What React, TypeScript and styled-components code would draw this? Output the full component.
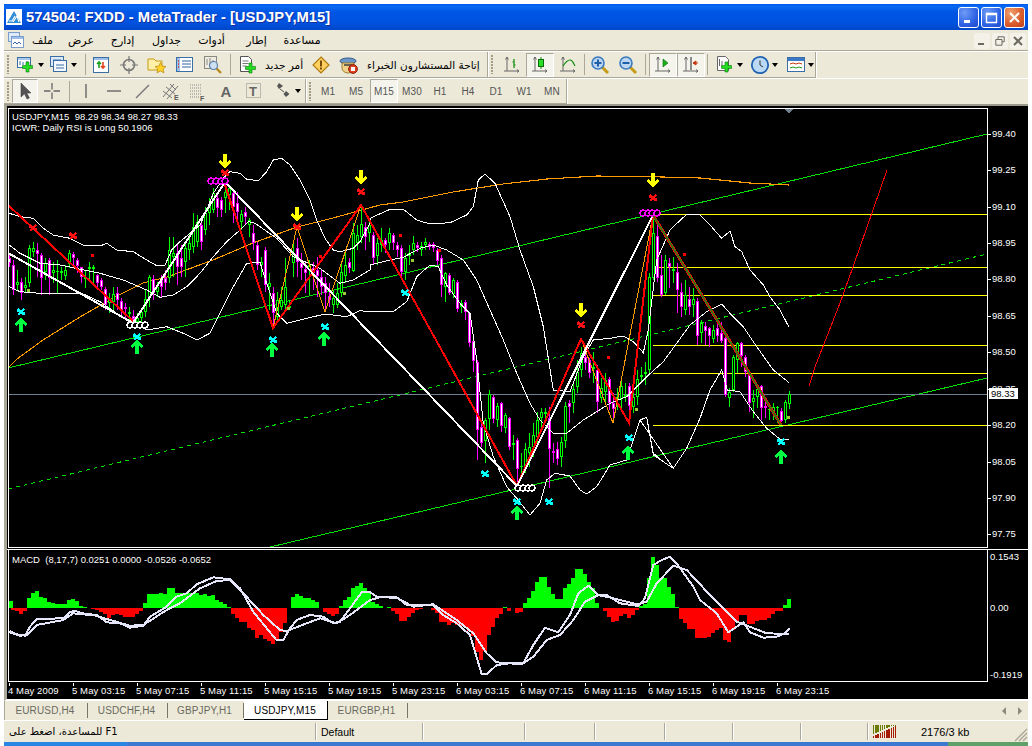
import React from "react";
import styled, { createGlobalStyle } from "styled-components";

const GlobalStyle = createGlobalStyle`
  html, body { margin: 0; padding: 0; background: #fff; }
  #root { width: 1032px; height: 746px; overflow: hidden; }
`;
const UI = `"Liberation Sans", "DejaVu Sans", sans-serif`;
const AR = `"DejaVu Sans", "Noto Sans", sans-serif`;
const BEIGE = "#ECE9D8";
const LINE = "#ACA899";

const Window = styled.div`
  margin: 4px 0 0 4px; width: 1024px; height: 742px;
  display: flex; flex-direction: column; background: ${BEIGE}; overflow: hidden;
`;
const TitleBar = styled.div`
  height: 26px; flex: none; display: flex; align-items: center; padding: 0 3px 0 2px;
  background: linear-gradient(180deg, #0058EE 0%, #0A6AF0 10%, #0055E5 30%, #0053E0 70%, #0247C8 100%);
`;
const TitleIcon = styled.svg`width: 16px; height: 16px; flex: none;`;
const TitleText = styled.span`
  margin-left: 4px; color: #fff; font: bold 14.8px ${UI}; white-space: nowrap;
  text-shadow: 1px 1px 0 #0F2F9C;
`;
const CaptionButtons = styled.div`margin-left: auto; display: flex; gap: 2px;`;
const CaptionButton = styled.div<{ $close?: boolean }>`
  width: 21px; height: 21px; box-sizing: border-box; border: 1px solid #fff; border-radius: 3px;
  display: flex; align-items: center; justify-content: center;
  background: ${(p) => (p.$close ? "radial-gradient(circle at 30% 25%, #F0A070, #DA5A2A 60%, #C0401A)" : "radial-gradient(circle at 30% 25%, #6E9CF6, #2E62E4 60%, #1F48C8)")};
`;
const MenuBar = styled.div`height: 20px; flex: none; display: flex; align-items: center; padding-left: 4px;`;
const MdiIcon = styled.svg`width: 16px; height: 16px; flex: none; margin-right: 0;`;
const MenuItem = styled.span<{ $w: number }>`
  width: ${(p) => p.$w}px; text-align: center; font: 11px ${AR}; color: #000; white-space: nowrap;
`;
const MdiButtons = styled.div`margin-left: auto; margin-right: 2px; display: flex; gap: 2px;`;
const MdiButton = styled.div`
  width: 16px; height: 16px; display: flex; align-items: center; justify-content: center;
  background: #F4F2E8; border-radius: 2px; margin-top: 2px;
`;
const Rebar = styled.div`flex: none; display: flex; flex-direction: column; border-top: 1px solid ${LINE};`;
const RebarRow = styled.div<{ $h: number }>`
  height: ${(p) => p.$h}px; display: flex; box-sizing: border-box; border-top: 1px solid #fff;
`;
const Segment = styled.div<{ $w: number }>`
  width: ${(p) => p.$w}px; flex: none; box-sizing: border-box; display: flex; align-items: center;
  padding-left: 3px; border-right: 1px solid ${LINE}; border-bottom: 1px solid ${LINE};
  box-shadow: 1px 0 0 #fff;
`;
const Grip = styled.div`
  width: 3px; height: 19px; flex: none; margin-right: 2px;
  background-image: radial-gradient(circle at 1px 1px, #A09C88 1px, transparent 1.1px);
  background-size: 3px 3px;
`;
const ToolButton = styled.div<{ $w?: number; $pressed?: boolean; $pad?: number }>`
  width: ${(p) => p.$w ?? 28}px; height: 24px; flex: none; box-sizing: border-box;
  display: flex; align-items: center; justify-content: ${(p) => (p.$pad !== undefined ? "flex-start" : "center")};
  padding-left: ${(p) => p.$pad ?? 0}px; gap: 3px;
  border: 1px solid ${(p) => (p.$pressed ? LINE : "transparent")};
  border-right-color: ${(p) => (p.$pressed ? "#fff" : "transparent")};
  border-bottom-color: ${(p) => (p.$pressed ? "#fff" : "transparent")};
  background: ${(p) => (p.$pressed ? "#F5F4EC" : "transparent")};
`;
const ToolSep = styled.div<{ $w?: number }>`
  width: ${(p) => p.$w ?? 5}px; height: 21px; flex: none; display: flex; justify-content: center;
  &::before { content: ""; width: 1px; background: ${LINE}; }
`;
const ToolIcon = styled.svg`width: 18px; height: 18px; flex: none; overflow: visible;`;
const Caret = styled.span`
  width: 0; height: 0; flex: none; border: 3px solid transparent; border-top: 4px solid #000; border-bottom: 0;
`;
const ToolLabel = styled.span<{ $gap?: number }>`
  font: 10.5px ${AR}; color: #000; white-space: nowrap; margin-left: ${(p) => p.$gap ?? 6}px;
`;
const PeriodButton = styled(ToolButton)`font: 10px ${UI}; color: #555; letter-spacing: .1px;`;

const ChartFrame = styled.div`
  height: 597px; flex: none; box-sizing: border-box; background: #000;
  border-top: 2px solid #9C9A8C; border-left: 3px solid ${LINE}; display: flex; flex-direction: column;
  border-bottom: 2px solid #fff;
`;
const Pane = styled.svg`display: block; flex: none; font-family: ${UI};`;
const ChartText = styled.text<{ $ls?: number; $dark?: boolean }>`
  fill: ${(p) => (p.$dark ? "#000" : "#fff")}; font-size: 9.5px; letter-spacing: ${(p) => p.$ls ?? 0}px; white-space: pre;
`;
const TabBar = styled.div`height: 20px; flex: none; display: flex; border-bottom: 1px solid #fff; box-sizing: border-box;`;
const Tab = styled.div<{ $w: number; $active?: boolean; $first?: boolean }>`
  width: ${(p) => p.$w}px; flex: none; box-sizing: border-box; font: 10px ${UI};
  display: flex; align-items: center; justify-content: center; letter-spacing: .15px;
  padding-right: ${(p) => (p.$active ? 1 : 3)}px;
  color: ${(p) => (p.$active ? "#000" : "#6A6A60")};
  background: ${(p) => (p.$active ? "#fff" : "linear-gradient(#77756A,#77756A) right center / 1px 15px no-repeat")};
  border-left: ${(p) => (p.$first ? `1px solid ${LINE}` : "0")};
  border-right: ${(p) => (p.$active ? "1px solid #000" : "0")};
  border-bottom: ${(p) => (p.$active ? "1px solid #000" : "0")};
`;
const TabArrows = styled.div`margin-left: auto; margin-right: 6px; display: flex; align-items: center; gap: 12px;`;
const TabArrow = styled.span<{ $right?: boolean }>`
  width: 0; height: 0; border: 4px solid transparent;
  ${(p) => (p.$right ? "border-left: 4px solid #8C8A7E; border-right: 0;" : "border-right: 4px solid #8C8A7E; border-left: 0;")}
`;
const StatusBar = styled.div`height: 21px; flex: none; display: flex; align-items: center; position: relative;`;
const StatusCell = styled.div<{ $w: number; $first?: boolean }>`
  width: ${(p) => p.$w}px; height: 17px; flex: none; box-sizing: border-box; display: flex; align-items: center;
  padding-left: 5px; font: 10.5px ${UI}; color: #000; white-space: nowrap;
  border-left: ${(p) => (p.$first ? "0" : `1px solid ${LINE}`)}; box-shadow: ${(p) => (p.$first ? "none" : "inset 1px 0 0 #fff")};
`;
const HelpText = styled.span`direction: rtl; font: 10px ${AR}; unicode-bidi: isolate;`;
const Traffic = styled.svg`width: 24px; height: 13px; flex: none;`;
const Traffic2 = styled.span`margin-left: 24px; font: 11px ${UI};`;
const ResizeGrip = styled.svg`position: absolute; right: 0; bottom: 0; width: 14px; height: 14px;`;
const BottomStrip = styled.div`flex: 1; display: flex;`;
const StripPart = styled.div<{ $c: string; $w?: number }>`
  background: ${(p) => p.$c}; ${(p) => (p.$w ? `width:${p.$w}px;` : "flex:1;")}
`;

/* ---------- chart data, traced bar by bar ---------- */
const z5 = "m445,460,430,470;m465,540,450,555;g515,525,480,540;m515,548,505,570;g525,535,500,545;g415,520,405,530;g415,425,395,440;m420,432,400,500;m435,505,430,555;g458,485,445,510;m450,505,445,555;g480,490,455,520;g484,487,450,550;g484,488,470,510;g480,498,465,510;g430,462,420,475;m433,445,425,470;m450,468,445,490;m472,502,470,520;g500,508,480,535;g472,478,455,510;g472,478,465,520;m495,520,492,530;m510,532,505,540;m537,585,530,600;g570,578,550,610;g552,575,530,610;m548,570,530,600;m572,602,565,620;m590,598,580,625;g605,612,590,640;m617,628,600,640;g625,635,610,640;g605,625,595,650;g568,605,540,620;g502,565,495,590;m508,548,495,570;g530,545,515,560;m510,530,495,560;m505,520,480,540;g420,505,380,520;g430,440,380,500;m430,470,400,525;m445,470,405,500;g415,455,400,500;g400,420,370,450;g350,410,310,430;g335,395,315,410;m345,395,320,420;g310,360,290,375;g285,310,265,345;g250,300,235,310;m265,295,250,320;m270,300,260,320;g245,265,225,310;g235,255,225,300;m250,290,245,340;m280,305,245,345;g312,335,300,360;m305,320,290,345;g330,345,325,380;m370,400,345,420;m405,465,395,480;g455,465,440,500;m420,525,410,545;g518,530,490,600;m550,610,530,650;g570,620,545,640;g570,590,530,600;g530,585,445,600;g588,595,570,600;g430,460,390,500;m415,455,385,500;m460,475,430,510;m478,490,455,550;g465,480,450,555;m475,490,455,540;m480,498,440,560;m500,530,480,555;m520,550,500,600;m558,570,520,590;g565,585,540,610;g550,585,520,595;g487,550,460,560;g465,498,430,520;m457,473,445,490;g370,482,340,485;g375,400,345,420;g342,380,290,400;m350,380,335,420;g345,370,335,395;m375,445,365,465";
const z6 = "g220,258,205,285;g210,225,175,245;m210,225,205,250;g190,220,175,240;m195,220,190,240;m225,240,215,262;m235,305,225,318;g265,305,250,330;g250,258,225,285;g220,240,198,255;m225,235,215,245;g228,240,215,258;g215,225,205,240;m222,230,215,240;m222,235,215,245;m240,272,235,285;m265,345,255,380;g308,350,305,395;m315,368,310,375;g330,372,325,385;m335,418,330,425;g400,412,390,430;m395,425,390,450;m430,520,425,530;m512,572,500,605;m575,780,570,870;m770,818,755,830;g750,812,745,880;g672,748,660,780;m680,748,675,760;g708,750,700,770;m700,768,695,785;g735,775,730,790;m745,832,740,840;g818,826,795,870;m810,898,805,945;g888,892,850,925;g838,895,820,910;g832,850,790,890;g795,830,760,860;g750,800,725,830;g725,745,715,785;g725,732,715,745;m745,838,710,955;m843,848,820,880;m838,868,815,885;g815,862,800,890;g708,812,695,835;m700,710,690,760;g658,700,640,730;g605,650,570,670;g550,600,530,620;m560,578,540,600;m570,610,565,625;g592,598,545,640;m600,695,585,730;g655,685,625,700;g630,665,610,700;m628,698,620,720;m698,718,670,760;g680,690,655,720;g648,688,630,720;g675,682,640,695;m648,708,640,765;g680,712,650,730;g628,680,600,705;g616,620,590,640;g606,612,575,645;g320,600,310,610;g190,325,135,330";
const z7 = "m198,325,165,335;m315,375,255,380;g270,370,255,375;m278,290,265,355;g298,302,260,340;m305,360,280,430;m365,410,340,440;g375,420,330,435;m388,410,350,435;g388,405,355,440;m393,497,385,525;g460,490,450,520;m468,482,455,525;m475,498,470,530;g480,508,465,520;m475,498,445,515;m490,512,455,520;m505,675,500,680;g665,685,655,710;g560,660,555,665;g520,570,515,610;m520,558,515,590;m560,605,555,620;m615,700,610,725;g683,695,660,745;g658,680,650,715;m648,715,645,750;m708,715,690,745;g716,720,700,750;g710,725,700,750;g712,714,708,760;m724,752,715,755;g695,750,690,760;g672,702,663,717";
const parse = (s: string, y0: number) =>
  s.split(";").map((e) => {
    const [t, b, h, l] = e.slice(1).split(",").map((n) => Math.round(y0 + Number(n) / 3));
    return { up: e[0] === "g", t, b, h, l };
  });
const candles = [...parse(z5, 110), ...parse(z6, 170), ...parse(z7, 170)];

const macdTops = [168,195,198,206,198,160,143,138,155,158,170,175,177,177,177,165,162,168,182,187,190,193,195,200,208,218,210,208,210,215,215,215,208,198,175,148,148,147,145,148,130,130,143,145,148,143,143,143,150,148,152,150,165,172,178,185,208,220,230,232,250,255,278,270,282,288,296,285,262,235,188,155,148,152,158,158,165,172,188,200,208,213,206,182,165,157,130,122,113,128,140,172,178,182,190,186,198,208,228,228,215,205,195,192,190,188,195,205,232,232,240,235,240,244,245,258,272,322,345,318,270,245,218,208,186,198,188,203,
  202,175,158,138,112,95,95,125,148,162,162,128,117,100,72,72,88,110,130,175,190,198,215,230,227,212,207,218,210,196,182,178,100,35,60,100,100,125,148,185,222,235,252,252,278,278,278,275,265,255,250,285,290,255,228,210,210,238,238,228,225,225,218,207,198,198,180,162];

type P = [number, number];
const toPts = (pts: P[], ox: number, oy: number) =>
  pts.map(([x, y]) => `${(ox + x / 3).toFixed(1)},${(oy + y / 3).toFixed(1)}`).join(" ");
const join = (...a: string[]) => a.join(" ");

const bandA = join(
  toPts([[28,310],[60,320],[100,325],[130,355],[160,375],[210,385],[250,405],[300,408],[320,400],[350,420],[400,425],[440,450],[470,467],[495,465],[515,420],[540,395],[570,370],[600,345],[620,300],[640,250],[670,205],[690,185],[720,190],[740,208],[775,212],[800,185],[820,150],[845,145],[870,165],[900,210],[930,270],[950,330],[975,385],[1000,420],[1020,425],[1060,415],[1080,395],[1110,340]], 0, 110),
  toPts([[0,145],[60,118],[100,118],[140,150],[180,162],[240,158],[290,135],[310,110],[325,30],[345,12],[375,40],[420,140],[450,240],[490,350],[520,470],[550,660],[600,665],[640,560],[670,510],[720,505],[760,498],[790,515],[820,548],[835,480],[860,270],[900,180]], 370, 170),
  toPts([[100,170],[140,133],[180,135],[210,165],[245,205],[270,183],[285,230],[305,245],[330,300],[370,345],[390,380],[420,420],[446,470]], 640, 170));
const bandB = join(
  toPts([[28,405],[60,430],[120,460],[180,465],[300,490],[370,510],[440,540],[480,562],[520,555],[560,530],[600,490],[640,440],[680,395],[720,360],[745,335],[765,340],[830,385],[880,440],[960,475],[1020,520],[1060,510],[1110,480]], 0, 110),
  toPts([[0,285],[60,270],[100,262],[150,235],[190,225],[230,240],[280,270],[320,330],[360,420],[400,510],[440,610],[480,700],[510,750],[550,790],[590,790],[640,750],[680,725],[720,700],[770,680],[830,620],[880,575]], 370, 170),
  toPts([[150,465],[200,425],[245,402],[270,430],[310,470],[350,530],[400,600],[446,637]], 640, 170));
const bandC = join(
  toPts([[28,530],[60,545],[120,550],[250,552],[300,575],[350,610],[400,640],[440,660],[500,650],[550,670],[590,690],[630,670],[660,610],[700,530],[740,460],[780,457],[800,520],[830,610],[860,640],[920,625],[975,612],[1040,620],[1080,602]], 0, 110),
  toPts([[0,425],[70,425],[110,395],[140,320],[180,285],[205,290],[230,345],[270,400],[300,430],[320,570],[340,760],[370,860],[410,950],[440,985],[480,1035],[510,1000],[530,930],[555,910],[600,918],[630,960],[650,972],[680,950],[720,885],[770,870],[810,750],[830,742],[850,850],[880,875],[910,895]], 370, 170),
  toPts([[0,750],[20,742],[40,855],[100,895],[140,835],[180,745],[210,660],[245,600],[262,660],[300,665],[340,725],[380,775],[420,808],[446,808]], 640, 170));
const orange = "9,367 17,359 43,340 80,317 113,298 143,283 167,277 213,260 253,243 297,227 333,218 380,205 403,202 453,192 503,184 547,179 597,176 663,177 700,178 750,183 789,185";
const macd1 = join(
  toPts([[28,258],[50,268],[75,272],[90,245],[110,222],[190,220],[210,202],[225,197],[245,205],[290,210],[320,232],[360,235],[390,248],[430,242],[450,215],[500,185],[530,155],[560,145],[590,118],[640,97],[690,103],[720,130],[760,200],[800,250],[830,286],[850,285],[870,250],[890,225],[930,210],[970,215],[1000,235],[1020,230],[1050,190],[1085,142],[1110,142],[1130,155],[1190,157],[1220,180],[1300,180],[1330,210],[1370,235],[1410,270],[1425,320],[1445,388],[1460,388],[1490,360],[1530,355]], 0, 545),
  toPts([[0,355],[40,355],[70,300],[105,248],[145,262],[180,210],[205,145],[235,122],[265,150],[290,150],[330,175],[385,183],[405,160],[430,60],[455,45],[480,35],[500,55],[550,125],[570,165],[620,205],[655,262],[700,232],[720,262],[760,278],[800,275],[825,265],[838,250]], 510, 545));
const macd2 = join(
  toPts([[28,262],[60,272],[80,270],[110,240],[190,225],[220,205],[290,212],[320,222],[390,242],[430,240],[500,195],[540,175],[600,130],[650,108],[690,105],[730,145],[790,210],[840,255],[860,258],[920,235],[960,220],[1010,235],[1050,210],[1110,165],[1140,157],[1190,158],[1240,185],[1300,178],[1370,225],[1420,265],[1460,325],[1490,352],[1530,355]], 0, 545),
  toPts([[0,355],[35,358],[70,335],[110,285],[150,270],[190,225],[225,170],[265,150],[310,160],[380,178],[410,170],[440,115],[490,62],[530,75],[600,150],[680,230],[770,265],[838,267]], 510, 545));

const priceLabels: [string, number][] = [["99.40",134],["99.25",170],["99.10",207],["98.95",243],["98.80",279],["98.65",316],["98.50",352],["98.35",389],["98.20",425],["98.05",462],["97.90",498],["97.75",534]];
const fibY = [214, 267, 295, 345, 373, 425];
const times = ["4 May 2009","5 May 03:15","5 May 07:15","5 May 11:15","5 May 15:15","5 May 19:15","5 May 23:15","6 May 03:15","6 May 07:15","6 May 11:15","6 May 15:15","6 May 19:15","6 May 23:15"];
const yellowArrows: P[] = [[225,161],[297,214],[361,177],[581,310],[653,180]];
const greenArrows: P[] = [[21,325],[137,347],[272,350],[324,339],[517,513],[628,453],[781,457]];
const redStars: P[] = [[33,228],[73,236],[225,173],[297,227],[361,192],[581,325],[653,198]];
const cyanStars: P[] = [[21,312],[137,337],[273,340],[325,327],[405,293],[485,474],[517,502],[549,502],[629,438],[781,442]];
const redDots: P[] = [[92,255],[320,256],[400,235],[439,250],[608,357],[684,254]];
const limeDots: P[] = [[28,290],[344,293],[288,308],[412,260],[636,409],[788,417]];
const rings = [{ xs: [130,135,140,145], y: 325, c: "#fff" }, { xs: [211,216,221,225], y: 181, c: "#FF00FF" }, { xs: [518,523,528,532], y: 488, c: "#fff" }, { xs: [643,648,652,657], y: 213, c: "#FF00FF" }];

const Star = ({ x, y, c }: { x: number; y: number; c: string }) => (
  <path d={`M${x - 3} ${y - 3}L${x + 3} ${y + 3}M${x - 3} ${y + 3}L${x + 3} ${y - 3}M${x - 3} ${y}L${x - 3} ${y - 3}M${x + 3} ${y}L${x + 3} ${y + 3}`} stroke={c} strokeWidth="1.6" fill="none" />
);

const MainPane = () => (
  <Pane width={1021} height={444} viewBox="7 106 1021 444" shapeRendering="crispEdges">
    <polyline points="8,368 987,134" stroke="#00E000" fill="none" />
    <polyline points="8,489 987,254" stroke="#00E000" strokeDasharray="4 4" fill="none" />
    <polyline points="270,547 987,378" stroke="#00E000" fill="none" />
    <polyline points={orange} stroke="#FF9A00" fill="none" strokeWidth="1.1" />
    <line x1="8" x2="987" y1="394.5" y2="394.5" stroke="#708090" />
    {fibY.map((y) => <line key={y} x1="653" x2="987" y1={y + 0.5} y2={y + 0.5} stroke="#FFFF00" />)}
    {candles.map((c, i) => {
      const x = 9 + 4 * i;
      const col = c.up ? "#00FF00" : "#FF00FF";
      return (
        <g key={i}>
          <rect x={x} y={c.h} width={1} height={Math.max(c.l - c.h, 1)} fill={col} />
          <rect x={x - 1} y={c.t} width={3} height={Math.max(c.b - c.t, 1)} fill={col} />
          {c.b - c.t > 2 && <rect x={x} y={c.t + 1} width={1} height={c.b - c.t - 2} fill={c.up ? "#000" : "#fff"} />}
        </g>
      );
    })}
    <polyline points={bandA} stroke="#fff" fill="none" />
    <polyline points={bandB} stroke="#fff" fill="none" />
    <polyline points={bandC} stroke="#fff" fill="none" />
    <polyline points="273,328 297,227 325,312 361,205" stroke="#FF9A00" fill="none" />
    <polyline points="581,339 613,423 653,215" stroke="#FF9A00" fill="none" />
    <polyline points="8,205 135,323" stroke="#FF0000" strokeWidth="2" fill="none" />
    <polyline points="225,185 273,328 361,205 517,486 581,339 629,423 653,215" stroke="#FF0000" strokeWidth="2" fill="none" />
    <polyline points="653,215 781,425" stroke="#FF0000" strokeWidth="3" fill="none" />
    <polyline points="653,215 781,425" stroke="#2E7D12" strokeWidth="1.6" fill="none" />
    <polyline points="8,253 133,323 225,182 517,486 653,215" stroke="#fff" strokeWidth="2" fill="none" />
    <polyline points="809,386 815,367 840,303 853,267 887,170" stroke="#FF0000" fill="none" />
    {rings.map((r) => r.xs.map((x) => <circle key={`${r.y}-${x}`} cx={x} cy={r.y} r={2.8} fill="#000" stroke={r.c} strokeWidth="1.6" />))}
    {redDots.map(([x, y]) => <rect key={x} x={x - 1} y={y - 1} width={3} height={3} fill="#FF0000" />)}
    {limeDots.map(([x, y]) => <rect key={x} x={x - 1} y={y - 1} width={3} height={3} fill="#9ACD32" />)}
    {yellowArrows.map(([x, y]) => <path key={x} d={`M${x} ${y - 7}V${y + 6}M${x - 5.5} ${y}L${x} ${y + 5.5}L${x + 5.5} ${y}`} stroke="#FFFF00" strokeWidth="3.4" fill="none" />)}
    {greenArrows.map(([x, y]) => <path key={x} d={`M${x} ${y + 7}V${y - 6}M${x - 5.5} ${y}L${x} ${y - 5.5}L${x + 5.5} ${y}`} stroke="#00FF40" strokeWidth="3.4" fill="none" />)}
    {redStars.map(([x, y]) => <Star key={x} x={x} y={y} c="#FF1010" />)}
    {cyanStars.map(([x, y]) => <Star key={x} x={x} y={y} c="#00FFFF" />)}
    <rect x="8.5" y="108.5" width="979" height="439" fill="none" stroke="#fff" />
    <line x1="7" x2="1028" y1="549.5" y2="549.5" stroke="#fff" />
    <path d="M785 109h8l-4 5z" fill="#708090" />
    {priceLabels.map(([t, y]) => (
      <g key={t}>
        <line x1="988" x2="991" y1={y} y2={y} stroke="#fff" />
        <ChartText x={992} y={y + 3}>{t}</ChartText>
      </g>
    ))}
    <rect x="989" y="388" width="29" height="11" fill="#fff" />
    <ChartText x={991} y={397} $dark>98.33</ChartText>
    <ChartText x={12} y={120}>USDJPY,M15  98.29 98.34 98.27 98.33</ChartText>
    <ChartText x={12} y={131}>ICWR: Daily RSI is Long 50.1906</ChartText>
  </Pane>
);

const MacdPane = () => (
  <Pane width={1021} height={133} viewBox="7 550 1021 133" shapeRendering="crispEdges">
    {macdTops.map((t, i) => {
      const x = 7.33 + 4 * i;
      const top = 545 + t / 3;
      const base = 607.5;
      const up = top < base;
      return (
        <rect key={i} x={Math.max(x, 9)} y={up ? top : base} width={4} height={Math.abs(top - base)} fill={up ? "#00FF00" : "#FF0000"} />
      );
    })}
    <polyline points={macd1} stroke="#E6E6FA" strokeWidth="2" fill="none" />
    <polyline points={macd2} stroke="#E6E6FA" strokeWidth="2" fill="none" />
    <line x1="8.5" x2="8.5" y1="550" y2="682" stroke="#fff" />
    <line x1="987.5" x2="987.5" y1="550" y2="682" stroke="#fff" />
    <line x1="8" x2="988" y1="681.5" y2="681.5" stroke="#fff" />
    <ChartText x={12} y={563}>MACD  (8,17,7) 0.0251 0.0000 -0.0526 -0.0652</ChartText>
    <ChartText x={990} y={560}>0.1543</ChartText>
    <ChartText x={990} y={611}>0.00</ChartText>
    <ChartText x={990} y={678}>-0.1919</ChartText>
  </Pane>
);

const TimeAxis = () => (
  <Pane width={1021} height={18} viewBox="7 682 1021 18" shapeRendering="crispEdges">
    {times.map((t, i) => (
      <g key={i}>
        <line x1={9.5 + 64 * i} x2={9.5 + 64 * i} y1="682" y2="685" stroke="#fff" />
        <ChartText x={8 + 64 * i} y={693} $ls={0.1}>{t}</ChartText>
      </g>
    ))}
  </Pane>
);

/* ---------- toolbar drawings ---------- */
const Plus = ({ x = 8, y = 9 }: { x?: number; y?: number }) => (
  <path d={`M${x + 3} ${y}h3v3.5h3.5v3H${x + 6}v3.5h-3v-3.5H${x - 0.5}v-3H${x + 3}z`} fill="#22DD22" stroke="#0B7B0B" strokeWidth=".6" />
);
const Axes = ({ c = "#666" }: { c?: string }) => (
  <path d="M4 1v14M1 15h15M2.5 3.5L4 1l1.5 2.5M14 13.5l2 1.5-2 1.5" stroke={c} fill="none" strokeWidth="1" />
);
const Mag = ({ sign }: { sign?: "+" | "-" }) => (
  <>
    <path d="M11 11l6 6" stroke="#C79A16" strokeWidth="3" />
    <circle cx="7" cy="7" r="6" fill="#BBD5F2" stroke="#3A7BBF" strokeWidth="1.6" />
    {sign && <path d={sign === "+" ? "M3.5 7h7M7 3.5v7" : "M3.5 7h7"} stroke="#1F5FA8" strokeWidth="2" />}
  </>
);
const Blue = "#3A6EA5";
const icons: Record<string, React.ReactNode> = {
  newChart: (<><rect x="0.5" y="1.5" width="13" height="10" fill="#fff" stroke={Blue} /><rect x="1" y="2" width="12" height="2" fill="#A8C8EE" /><path d="M3 9v-4M6 9V6M10 9V5" stroke={Blue} /><Plus x={6} y={6} /></>),
  profiles: (<><rect x="0.5" y="0.5" width="13" height="10" fill="#DCE9F8" stroke={Blue} /><rect x="3.5" y="4.5" width="13" height="11" fill="#F5F8FE" stroke={Blue} /><path d="M3 4h8M6 9h8M6 12h8" stroke={Blue} /></>),
  market: (<><rect x="1.5" y="1.5" width="15" height="15" fill="#fff" stroke={Blue} /><rect x="2" y="2" width="14" height="2" fill="#9CC0EA" /><path d="M7 12V6M5 8l2-2 2 2" stroke="#1CA01C" strokeWidth="1.6" fill="none" /><path d="M11 6v6M9 10l2 2 2-2" stroke="#E0441C" strokeWidth="1.6" fill="none" /></>),
  target: (<><circle cx="9" cy="9" r="5.5" fill="none" stroke="#777" strokeWidth="1.6" /><path d="M9 0v6M9 12v6M0 9h6M12 9h6" stroke="#777" strokeWidth="1.2" /></>),
  fav: (<><path d="M0 3h6l2 2h6v9H0z" fill="#FFF0A8" stroke="#C79A16" /><path d="M12.5 6.5l1.7 3.6 3.8.4-2.9 2.6.9 3.8-3.5-2-3.5 2 .9-3.8-2.9-2.6 3.8-.4z" fill="#FFD426" stroke="#B8820C" strokeWidth=".7" /></>),
  nav: (<><rect x="0.5" y="1.5" width="16" height="14" fill="#fff" stroke={Blue} /><rect x="1" y="2" width="3" height="13" fill="#9CC0EA" /><path d="M6 5h9M6 8h9M6 11h9" stroke="#2F62A8" /><path d="M2 5h1M2 8h1M2 11h1" stroke="#D03020" strokeWidth="1.4" /></>),
  tester: (<><rect x="0.5" y="0.5" width="12" height="12" fill="#EEECE0" stroke="#8A8A80" /><path d="M3 3v6M6 2v7M9 4v5" stroke="#8A8A80" /><path d="M12 12l5 5" stroke="#B88A20" strokeWidth="2.4" /><circle cx="9.5" cy="9.5" r="4" fill="#CFE0F2" stroke="#5A7FA8" strokeWidth="1.2" /></>),
  order: (<><path d="M1.5 .5h8l3 3v12h-11z" fill="#fff" stroke="#555" /><path d="M3.5 5h6M3.5 7.5h6M3.5 10h4" stroke="#777" /><Plus x={7} y={7} /></>),
  warn: (<><path d="M9 1l8 8-8 8-8-8z" fill="#FFD060" stroke="#B07A10" strokeWidth="1.2" /><path d="M9 4.5v6" stroke="#7A4A08" strokeWidth="2" /><rect x="8" y="11.5" width="2" height="2" fill="#7A4A08" /></>),
  expert: (<><ellipse cx="8" cy="5" rx="8" ry="3" fill="#6A96C8" stroke="#345A8C" /><path d="M2 7h12v5a6 5 0 0 1-12 0z" fill="#F1D28A" stroke="#9C7A30" /><path d="M4 9h8" stroke="#333" strokeWidth="1.4" /><circle cx="13" cy="13" r="4.4" fill="#E04020" stroke="#8C2008" /><rect x="11" y="11" width="4" height="4" fill="#fff" /></>),
  bars: (<><Axes /><path d="M11 3v9M9.5 6H11M11 9h1.5" stroke="#0A8A0A" strokeWidth="1.2" /></>),
  candle: (<><Axes /><path d="M10 1v12" stroke="#0A8A0A" /><rect x="7.5" y="3.5" width="5" height="7" fill="#28E028" stroke="#0A6A0A" /></>),
  line: (<><Axes /><path d="M4 10c2-3 4-6 7-6s3 3 5 6" stroke="#0A8A0A" strokeWidth="1.2" fill="none" /></>),
  zoomIn: <Mag sign="+" />,
  zoomOut: <Mag sign="-" />,
  auto: (<><Axes /><path d="M9 3l5 4-5 4z" fill="#18B018" stroke="#0A6A0A" strokeWidth=".6" /></>),
  shift: (<><Axes /><path d="M9 1v13" stroke="#444" strokeWidth="1.2" /><path d="M11 7h5M11 7l3-2v4z" stroke="#C83810" fill="#C83810" /></>),
  indicator: (<><path d="M1.5 .5h8l3 3v11h-11z" fill="#fff" stroke="#666" /><path d="M3.5 3v7M6 5v5" stroke="#666" /><Plus x={6} y={6} /></>),
  clock: (<><circle cx="9" cy="9" r="8.2" fill="#BBD8F4" stroke="#1F62B0" strokeWidth="1.8" /><path d="M9 4.5V9l3 2" stroke="#333" fill="none" /></>),
  template: (<><rect x="0.5" y="1.5" width="17" height="14" fill="#fff" stroke={Blue} /><rect x="1" y="2" width="16" height="3" fill="#3A78C8" /><path d="M3 8l3-1 3 1 3-1 3 1" stroke="#C83810" fill="none" /><path d="M3 12l3-1 3 1 3-1 3 1" stroke="#1CA01C" fill="none" /></>),
  cursor: (<path d="M5 1v14l3.5-3.2L11 17l2.4-1-2.6-5H15z" fill="#555" stroke="#333" strokeWidth=".5" />),
  cross: (<path d="M9 1v6.5M9 10.5V17M1 9h6.5M10.5 9H17" stroke="#666" strokeWidth="1.3" />),
  vline: (<path d="M9 2v14" stroke="#666" strokeWidth="1.4" />),
  hline: (<path d="M2 9h14" stroke="#666" strokeWidth="1.4" />),
  trend: (<path d="M3 16L16 3" stroke="#777" strokeWidth="1.4" />),
  channel: (<><path d="M2 15L13 2M6 17L17 4M2 9l9 7M5 5l9 7M9 2l6 6" stroke="#777" /><text x="13" y="18" fontSize="7" fontFamily={UI} fontWeight="bold" fill="#555">E</text></>),
  fib: (<><path d="M1 3h12M1 6h12M1 9h12M1 12h12M1 15h9" stroke="#888" strokeDasharray="1 1" /><text x="11" y="19" fontSize="7" fontFamily={UI} fontWeight="bold" fill="#555">F</text></>),
  textA: (<text x="3.5" y="15" fontSize="15" fontFamily={UI} fontWeight="bold" fill="#666">A</text>),
  textT: (<><rect x="1.5" y="1.5" width="14" height="14" fill="none" stroke="#888" strokeDasharray="1 1" /><text x="4" y="14" fontSize="13" fontFamily={UI} fontWeight="bold" fill="#666">T</text></>),
  arrows: (<><path d="M5 1l4 3-4 3-2-3z" fill="#555" /><path d="M12 9l3.5 3-3.5 3-2.5-3z" fill="#555" /><path d="M6 7l4 3" stroke="#555" /></>),
};
const Icon = ({ n }: { n: string }) => <ToolIcon viewBox="0 0 18 18">{icons[n]}</ToolIcon>;

const periods = ["M1","M5","M15","M30","H1","H4","D1","W1","MN"];
const menus: [string, number][] = [["ملف",37],["عرض",40],["إدارج",43],["جداول",45],["أدوات",45],["إطار",45],["مساعدة",46]];

export default function App() {
  return (
    <>
      <GlobalStyle />
      <Window>
        <TitleBar>
          <TitleIcon viewBox="0 0 16 16">
            <rect width="16" height="16" fill="#fff" />
            <path d="M1 14L8 2l7 12z" fill="#2E8BD8" />
            <path d="M3 12h3l3-5M7 13l4-6 2 6" stroke="#fff" fill="none" strokeWidth="1.2" />
          </TitleIcon>
          <TitleText>574504: FXDD - MetaTrader - [USDJPY,M15]</TitleText>
          <CaptionButtons>
            <CaptionButton><svg width="13" height="13" viewBox="0 0 13 13"><rect x="2" y="9" width="6" height="3" fill="#fff" /></svg></CaptionButton>
            <CaptionButton><svg width="13" height="13" viewBox="0 0 13 13"><path d="M1.5 2.5h10v9h-10zM1 3.5h11" fill="none" stroke="#fff" strokeWidth="1.4" /></svg></CaptionButton>
            <CaptionButton $close><svg width="13" height="13" viewBox="0 0 13 13"><path d="M2 2l9 9M11 2l-9 9" stroke="#fff" strokeWidth="2" /></svg></CaptionButton>
          </CaptionButtons>
        </TitleBar>
        <MenuBar>
          <MdiIcon viewBox="0 0 16 16">
            <rect x="0.5" y="0.5" width="11" height="9" fill="#DCE9F8" stroke="#7A9CC8" />
            <rect x="3.5" y="4.5" width="12" height="11" fill="#fff" stroke="#7A9CC8" />
            <rect x="4" y="5" width="11" height="2" fill="#9CC0EA" />
            <path d="M5 12l2-2 2 2 2-2 2 2" stroke="#2F62A8" fill="none" />
          </MdiIcon>
          {menus.map(([m, w]) => <MenuItem key={m} $w={w}>{m}</MenuItem>)}
          <MdiButtons>
            <MdiButton><svg width="10" height="10" viewBox="0 0 10 10"><rect x="1" y="7" width="6" height="2" fill="#6A6A60" /></svg></MdiButton>
            <MdiButton><svg width="10" height="10" viewBox="0 0 10 10"><path d="M3 3V.8h6.2v5H7M.8 3.5h6.2v5.7H.8z" fill="none" stroke="#6A6A60" /></svg></MdiButton>
            <MdiButton><svg width="10" height="10" viewBox="0 0 10 10"><path d="M1 1l8 8M9 1L1 9" stroke="#6A6A60" strokeWidth="2" /></svg></MdiButton>
          </MdiButtons>
        </MenuBar>
        <Rebar>
          <RebarRow $h={27}>
            <Segment $w={484}>
              <Grip />
              <ToolButton $w={34} $pad={4}><Icon n="newChart" /><Caret /></ToolButton>
              <ToolButton $w={37} $pad={3}><Icon n="profiles" /><Caret /></ToolButton>
              <ToolSep $w={4} />
              <ToolButton><Icon n="market" /></ToolButton>
              <ToolButton><Icon n="target" /></ToolButton>
              <ToolButton><Icon n="fav" /></ToolButton>
              <ToolButton><Icon n="nav" /></ToolButton>
              <ToolButton><Icon n="tester" /></ToolButton>
              <ToolSep $w={7} />
              <ToolButton $w={72} $pad={4}><Icon n="order" /><ToolLabel $gap={5}>أمر جديد</ToolLabel></ToolButton>
              <ToolButton $w={29}><Icon n="warn" /></ToolButton>
              <ToolButton $w={150} $pad={4}><Icon n="expert" /><ToolLabel>إتاحة المستشارون الخبراء</ToolLabel></ToolButton>
            </Segment>
            <Segment $w={328}>
              <Grip />
              <ToolButton $w={1} />
              <ToolButton><Icon n="bars" /></ToolButton>
              <ToolButton $pressed><Icon n="candle" /></ToolButton>
              <ToolButton><Icon n="line" /></ToolButton>
              <ToolSep $w={4} />
              <ToolButton><Icon n="zoomIn" /></ToolButton>
              <ToolButton><Icon n="zoomOut" /></ToolButton>
              <ToolSep $w={7} />
              <ToolButton $pressed><Icon n="auto" /></ToolButton>
              <ToolButton $pressed><Icon n="shift" /></ToolButton>
              <ToolSep $w={5} />
              <ToolButton $w={36} $pad={5}><Icon n="indicator" /><Caret /></ToolButton>
              <ToolButton $w={36} $pad={4}><Icon n="clock" /><Caret /></ToolButton>
              <ToolButton $w={36} $pad={4}><Icon n="template" /><Caret /></ToolButton>
            </Segment>
          </RebarRow>
          <RebarRow $h={26}>
            <Segment $w={302}>
              <Grip />
              <ToolButton $w={26} $pressed><Icon n="cursor" /></ToolButton>
              <ToolButton><Icon n="cross" /></ToolButton>
              <ToolSep $w={6} />
              <ToolButton><Icon n="vline" /></ToolButton>
              <ToolButton><Icon n="hline" /></ToolButton>
              <ToolButton><Icon n="trend" /></ToolButton>
              <ToolButton><Icon n="channel" /></ToolButton>
              <ToolButton><Icon n="fib" /></ToolButton>
              <ToolButton><Icon n="textA" /></ToolButton>
              <ToolButton><Icon n="textT" /></ToolButton>
              <ToolButton $w={34} $pad={5}><Icon n="arrows" /><Caret /></ToolButton>
            </Segment>
            <Segment $w={261}>
              <Grip />
              {periods.map((p) => (
                <PeriodButton key={p} $pressed={p === "M15"}>{p}</PeriodButton>
              ))}
            </Segment>
          </RebarRow>
        </Rebar>
        <ChartFrame>
          <MainPane />
          <MacdPane />
          <TimeAxis />
        </ChartFrame>
        <TabBar>
          <Tab $w={84} $first>EURUSD,H4</Tab>
          <Tab $w={80}>USDCHF,H4</Tab>
          <Tab $w={76}>GBPJPY,H1</Tab>
          <Tab $w={84} $active>USDJPY,M15</Tab>
          <Tab $w={80}>EURGBP,H1</Tab>
          <TabArrows><TabArrow /><TabArrow $right /></TabArrows>
        </TabBar>
        <StatusBar>
          <StatusCell $w={311} $first><HelpText>F1 للمساعدة، اضغط على</HelpText></StatusCell>
          <StatusCell $w={107}>Default</StatusCell>
          <StatusCell $w={102} />
          <StatusCell $w={70} />
          <StatusCell $w={70} />
          <StatusCell $w={68} />
          <StatusCell $w={68} />
          <StatusCell $w={67} />
          <StatusCell $w={161}>
            <Traffic viewBox="0 0 24 13" shapeRendering="crispEdges">
              {Array.from({ length: 11 }, (_, i) => (
                <g key={i}>
                  <rect x={i * 2.2} y={10.5 - i} width="1.4" height={2.5 + i} fill="#A61C00" />
                  <rect x={i * 2.2} y="0" width="1.4" height={Math.max(8.5 - i, 1)} fill="#6B7A00" />
                </g>
              ))}
            </Traffic>
            <Traffic2>2176/3 kb</Traffic2>
          </StatusCell>
          <ResizeGrip viewBox="0 0 14 14"><path d="M13 1L1 13M13 5l-8 8M13 9l-4 4" stroke="#ACA899" strokeWidth="1.4" /></ResizeGrip>
        </StatusBar>
        <BottomStrip>
          <StripPart $c="#2A86E4" $w={123} />
          <StripPart $c="#3A78D2" />
          <StripPart $c="#5F9F68" $w={80} />
        </BottomStrip>
      </Window>
    </>
  );
}
